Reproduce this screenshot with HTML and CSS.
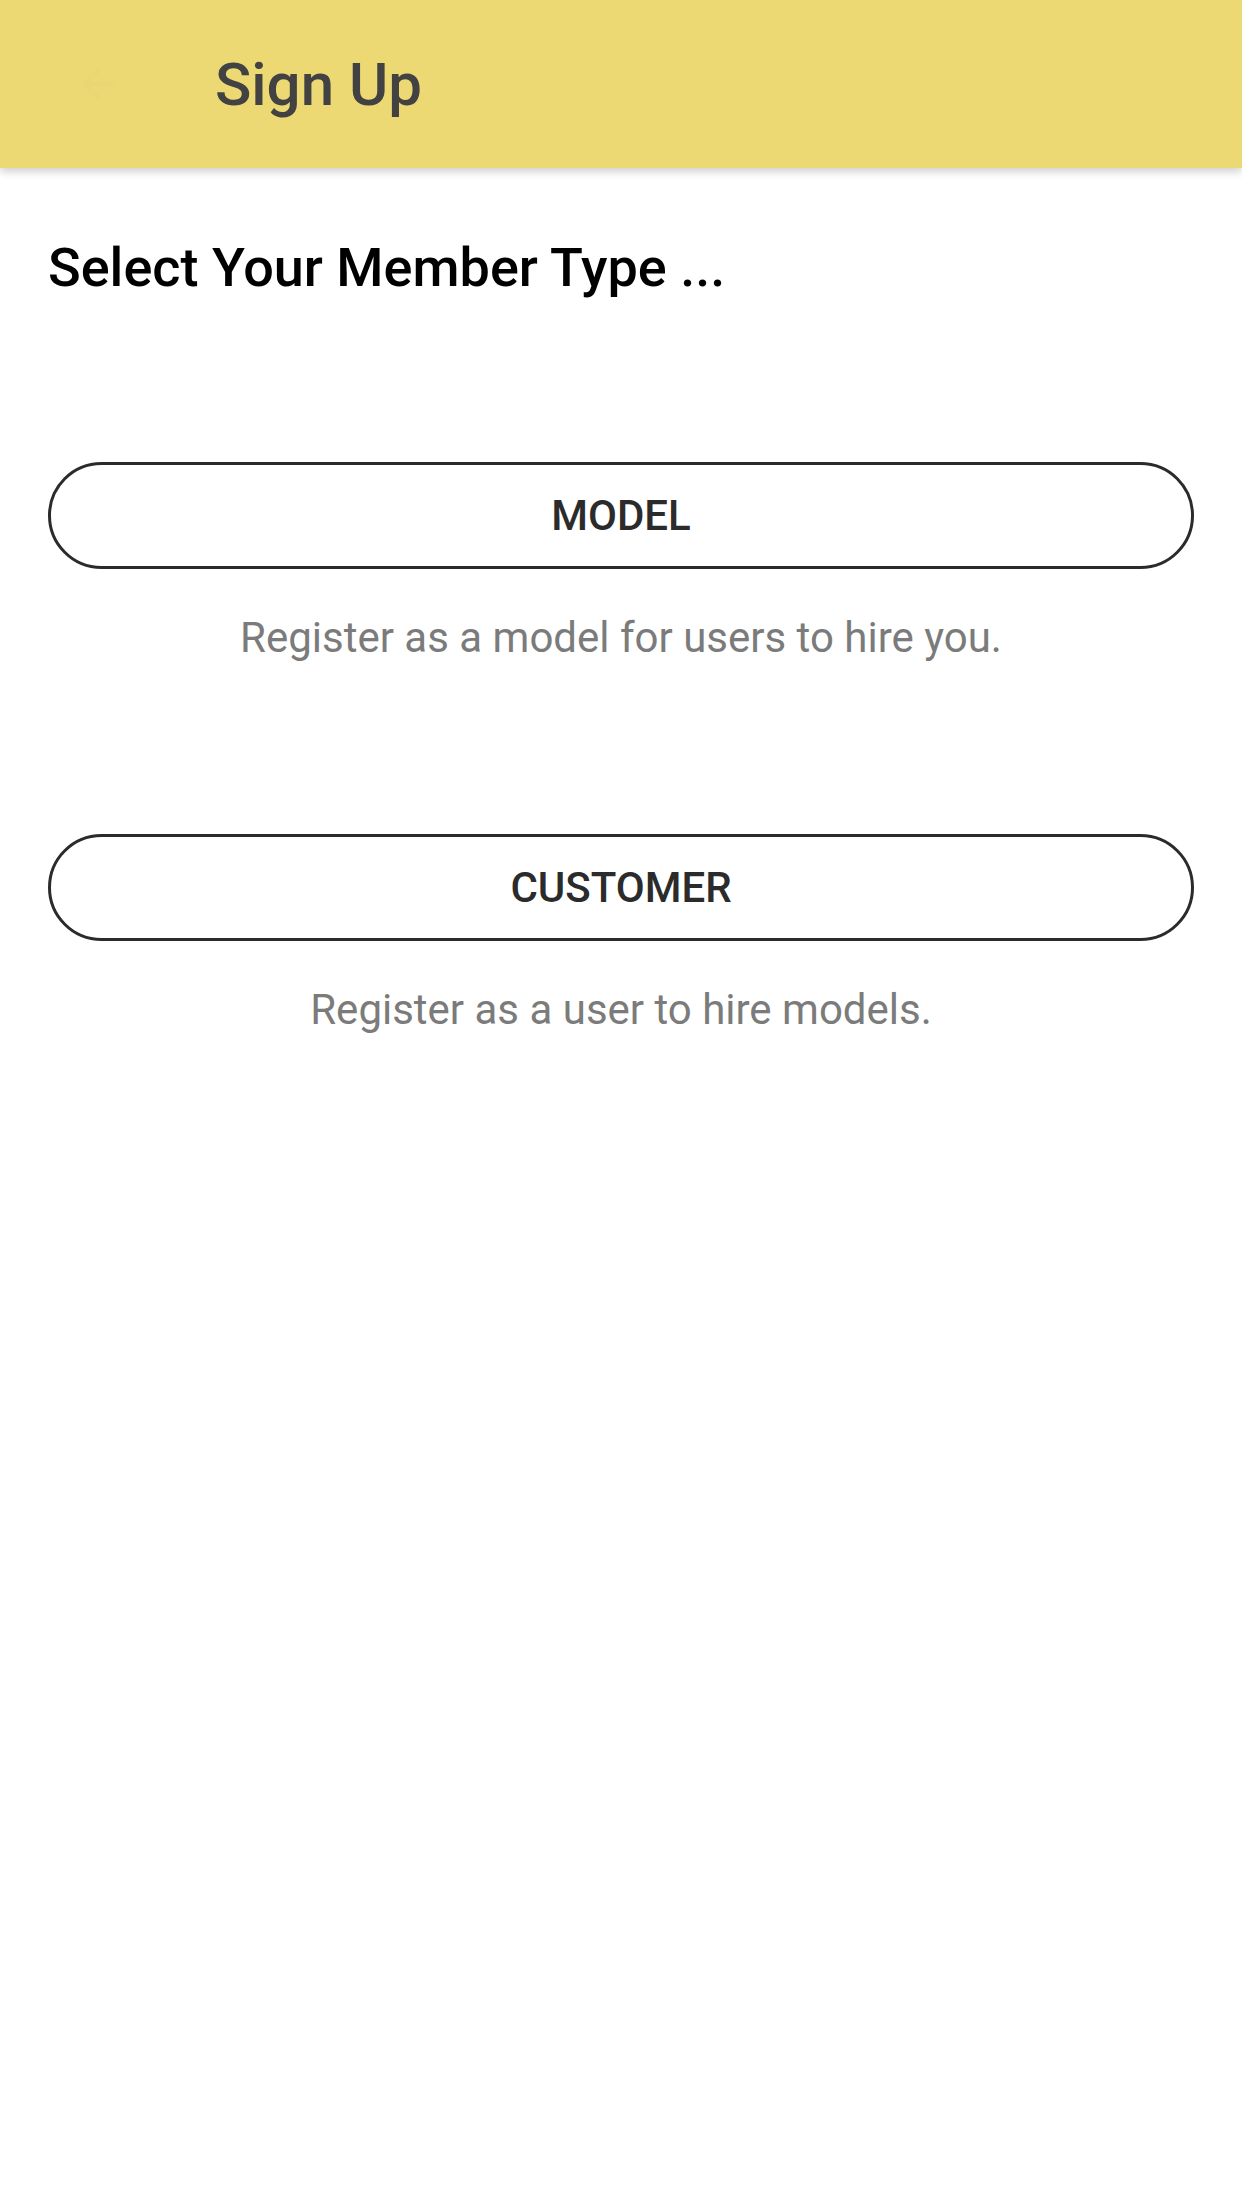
FILE: index.html
```html
<!DOCTYPE html>
<html lang="en">
<head>
    <meta charset="UTF-8">
    <meta name="viewport" content="width=device-width, initial-scale=1.0">
    <title>Sign Up</title>
    <link rel="stylesheet" href="styles.css">
</head>
<body>
    <div class="app_bar">
        <svg class="back_icon" width="48" height="48" viewBox="0 0 24 24">
            <path d="M20 11H7.83l5.59-5.59L12 4l-8 8 8 8 1.41-1.41L7.83 13H20v-2z"/>
        </svg>
        <h1 class="app_title">Sign Up</h1>
    </div>

    <div class="content">
        <h2 class="section_title">Select Your Member Type ...</h2>

        <div class="member_option">
            <button class="member_button" type="button">MODEL</button>
            <p class="member_desc">Register as a model for users to hire you.</p>
        </div>

        <div class="member_option">
            <button class="member_button" type="button">CUSTOMER</button>
            <p class="member_desc">Register as a user to hire models.</p>
        </div>
    </div>
</body>
</html>
```

FILE: styles.css
```css
* {
    margin: 0;
    padding: 0;
    box-sizing: border-box;
    font-family: 'Roboto', 'Noto Sans', sans-serif;
}

body {
    width: 1242px;
    min-height: 2208px;
    background: #ffffff;
}

.app_bar {
    height: 168px;
    background: #edd974;
    display: flex;
    align-items: center;
    padding-left: 74px;
    box-shadow: 0 4px 8px rgba(0, 0, 0, 0.18);
    position: relative;
    z-index: 1;
}

.back_icon {
    fill: #ead672;
    margin-right: 93px;
    flex-shrink: 0;
}

.app_title {
    font-size: 60px;
    font-weight: 500;
    color: #424242;
    line-height: 1;
    margin-top: 2px;
}

.content {
    padding: 68px 48px 0 48px;
}

.section_title {
    font-size: 54px;
    font-weight: 500;
    color: #000000;
    line-height: 64px;
    margin-bottom: 162px;
}

.member_option {
    margin-bottom: 172px;
}

.member_button {
    display: block;
    width: 100%;
    height: 107px;
    background: #ffffff;
    border: 3px solid #2b2b2b;
    border-radius: 54px;
    font-size: 42px;
    font-weight: 500;
    color: #2b2b2b;
    cursor: pointer;
}

.member_desc {
    margin-top: 44px;
    text-align: center;
    font-size: 42px;
    line-height: 49px;
    color: #7b7b7b;
}
```
